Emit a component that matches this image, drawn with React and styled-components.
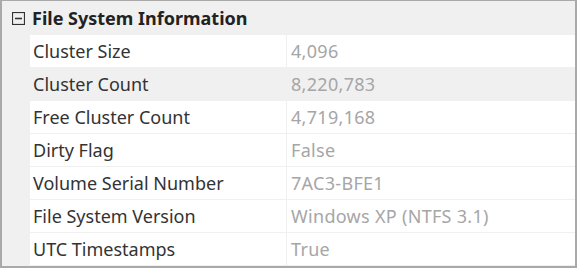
import React from "react";
import styled, { createGlobalStyle } from "styled-components";

const Global = createGlobalStyle`
  html, body { margin: 0; padding: 0; background: #ffffff; }
  body { font-family: "Noto Sans", "Open Sans", sans-serif; }
`;

const Grid = styled.div`
  width: 573px;
  height: 265px;
  border: 2px solid #a9a9a9;
  border-top-width: 1px;
  background: #f0f0f0;
  display: flex;
  flex-direction: column;
  overflow: hidden;
`;

const Header = styled.div`
  height: 34px;
  display: flex;
  align-items: center;
  background: #f0f0f0;
`;

const Toggle = styled.div`
  width: 28px;
  display: flex;
  justify-content: center;
  padding-left: 2px;
`;

const Title = styled.div`
  font-size: 18px;
  font-weight: 700;
  color: #222;
`;

const Row = styled.div`
  height: 32px;
  display: grid;
  grid-template-columns: 28px 256px 1fr;
  border-bottom: 1px solid #f0f0f0;
`;

const Gutter = styled.div`
  background: #f0f0f0;
`;

const Cell = styled.div`
  background: ${(p) => (p.$selected ? "#f0f0f0" : "#ffffff")};
  display: flex;
  align-items: center;
  padding-left: ${(p) => (p.$value ? "4px" : "3px")};
  font-size: 18px;
  letter-spacing: ${(p) => (p.$value ? "0.3px" : "0")};
  color: ${(p) => (p.$value ? "#a6a6a6" : "#333333")};
  border-left: ${(p) => (p.$value ? "1px solid #f0f0f0" : "none")};
  white-space: nowrap;
`;

const rows = [
  ["Cluster Size", "4,096"],
  ["Cluster Count", "8,220,783", true],
  ["Free Cluster Count", "4,719,168"],
  ["Dirty Flag", "False"],
  ["Volume Serial Number", "7AC3-BFE1"],
  ["File System Version", "Windows XP (NTFS 3.1)"],
  ["UTC Timestamps", "True"],
];

export default function App() {
  return (
    <>
      <Global />
      <Grid>
        <Header>
          <Toggle>
            <svg width="13" height="13" viewBox="0 0 13 13">
              <rect x="0.5" y="0.5" width="12" height="12" fill="none" stroke="#333" strokeWidth="1.2" />
              <line x1="3" y1="6.5" x2="10" y2="6.5" stroke="#333" strokeWidth="1.6" />
            </svg>
          </Toggle>
          <Title>File System Information</Title>
        </Header>
        {rows.map(([n, v, sel]) => (
          <Row key={n}>
            <Gutter />
            <Cell $selected={sel}>{n}</Cell>
            <Cell $value $selected={sel}>{v}</Cell>
          </Row>
        ))}
      </Grid>
    </>
  );
}
